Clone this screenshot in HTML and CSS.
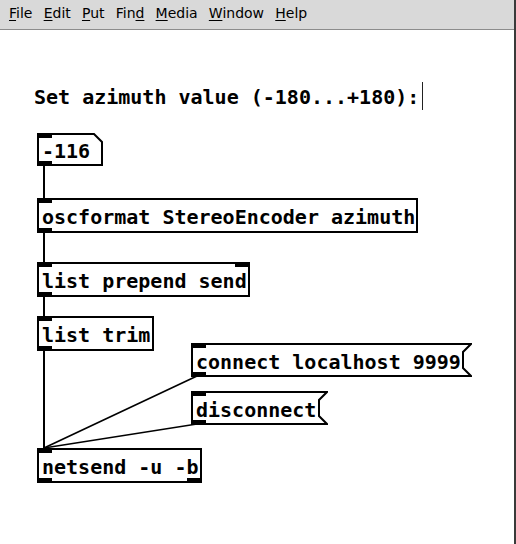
FILE: index.html
```html
<!DOCTYPE html>
<html>
<head>
<meta charset="utf-8">
<link rel="stylesheet" href="styles.css">
</head>
<body>
<div class="window">
  <div class="main">
    <nav class="menubar">
      <span class="menu"><u>F</u>ile</span>
      <span class="menu"><u>E</u>dit</span>
      <span class="menu"><u>P</u>ut</span>
      <span class="menu">Fin<u>d</u></span>
      <span class="menu"><u>M</u>edia</span>
      <span class="menu"><u>W</u>indow</span>
      <span class="menu"><u>H</u>elp</span>
    </nav>
    <div class="canvas">
      <svg class="wires" width="514" height="514" viewBox="0 0 514 514">
        <line x1="44" y1="134" x2="44" y2="169"/>
        <line x1="44" y1="202" x2="44" y2="233"/>
        <line x1="44" y1="266" x2="44" y2="287"/>
        <line x1="44" y1="320" x2="44" y2="419"/>
        <line class="thin" x1="197" y1="346" x2="44" y2="418"/>
        <line class="thin" x1="197" y1="394" x2="44" y2="418"/>
      </svg>

      <div class="comment">Set azimuth value (-180...+180):</div>
      <div class="cursor"></div>

      <div class="node atom n-num"><svg class="shape" width="66" height="33"><polygon points="1,1 57,1 65,9 65,32 1,32"/></svg><span class="label">-116</span><i class="io in-l"></i><i class="io out-l"></i></div>

      <div class="node obj n-osc"><span class="label">oscformat StereoEncoder azimuth</span><i class="io in-l"></i><i class="io out-l"></i></div>
      <div class="node obj n-prepend"><span class="label">list prepend send</span><i class="io in-l"></i><i class="io in-r"></i><i class="io out-l"></i></div>
      <div class="node obj n-trim"><span class="label">list trim</span><i class="io in-l"></i><i class="io out-l"></i></div>

      <div class="node msg n-connect"><svg class="shape" width="281" height="34"><polygon points="1,1 280,1 272,9 272,25 280,33 1,33"/></svg><span class="label">connect localhost 9999</span><i class="io in-l"></i><i class="io out-l"></i></div>
      <div class="node msg n-disconnect"><svg class="shape" width="137" height="34"><polygon points="1,1 136,1 128,9 128,25 136,33 1,33"/></svg><span class="label">disconnect</span><i class="io in-l"></i><i class="io out-l"></i></div>

      <div class="node obj n-netsend"><span class="label">netsend -u -b</span><i class="io in-l"></i><i class="io out-l"></i><i class="io out-r"></i></div>
    </div>
  </div>
  <div class="edge"></div>
</div>
</body>
</html>
```
FILE: styles.css
```css
html, body {
  margin: 0;
  padding: 0;
  background: #ffffff;
}
body {
  width: 516px;
  height: 544px;
  overflow: hidden;
}
.window {
  display: flex;
  width: 516px;
  height: 544px;
}
.main {
  flex: 1;
  display: flex;
  flex-direction: column;
  min-width: 0;
}
.edge {
  width: 2px;
  background: #3a3a3a;
}
.menubar {
  height: 29px;
  border-bottom: 1px solid #8c8c8c;
  background: #d9d9d9;
  display: flex;
  align-items: flex-start;
  gap: 11.2px;
  padding-left: 9px;
  font-family: "DejaVu Sans", sans-serif;
  font-size: 14px;
  line-height: 17px;
  color: #000;
}
.menu {
  padding-top: 5px;
}
.menu u {
  text-decoration: underline;
  text-decoration-thickness: 1px;
  text-underline-offset: 2px;
}
.canvas {
  position: relative;
  flex: 1;
  background: #fff;
  font-family: "DejaVu Sans Mono", monospace;
  font-weight: bold;
  font-size: 20px;
  line-height: 24px;
  color: #000;
}
.wires {
  position: absolute;
  left: 0;
  top: 0;
}
.wires line {
  stroke: #000;
  stroke-width: 2;
}
.wires line.thin {
  stroke-width: 1.6;
}
.comment {
  position: absolute;
  left: 34px;
  top: 55px;
  white-space: pre;
}
.cursor {
  position: absolute;
  left: 422px;
  top: 52px;
  width: 1px;
  height: 28px;
  background: #222;
}
.node {
  position: absolute;
  box-sizing: border-box;
  background: #fff;
}
.label {
  position: relative;
  white-space: pre;
}
.obj {
  border: 2px solid #000;
  padding: 5px 0 0 3px;
  height: 35px;
}
.atom, .msg {
  padding: 4px 0 0 5px;
  background: transparent;
}
.atom { height: 33px; padding-top: 6px; }
.msg { height: 34px; padding-top: 7px; }
.shape {
  position: absolute;
  left: 0;
  top: 0;
}
.shape polygon {
  fill: #fff;
  stroke: #000;
  stroke-width: 2;
}
.io {
  position: absolute;
  width: 15px;
  height: 5px;
  background: #000;
}
.obj .in-l { left: -2px; top: -2px; }
.obj .in-r { right: -2px; top: -2px; }
.obj .out-l { left: -2px; bottom: -2px; }
.obj .out-r { right: -2px; bottom: -2px; }
.atom .in-l, .msg .in-l { left: 0; top: 0; }
.atom .out-l, .msg .out-l { left: 0; bottom: 0; }

.n-num { left: 37px; top: 103px; width: 66px; }
.n-osc { left: 37px; top: 168px; width: 381px; }
.n-prepend { left: 37px; top: 232px; width: 213px; }
.n-trim { left: 37px; top: 286px; width: 117px; }
.n-connect { left: 191px; top: 313px; width: 281px; }
.n-disconnect { left: 191px; top: 361px; width: 137px; }
.n-netsend { left: 37px; top: 418px; width: 165px; }
```
